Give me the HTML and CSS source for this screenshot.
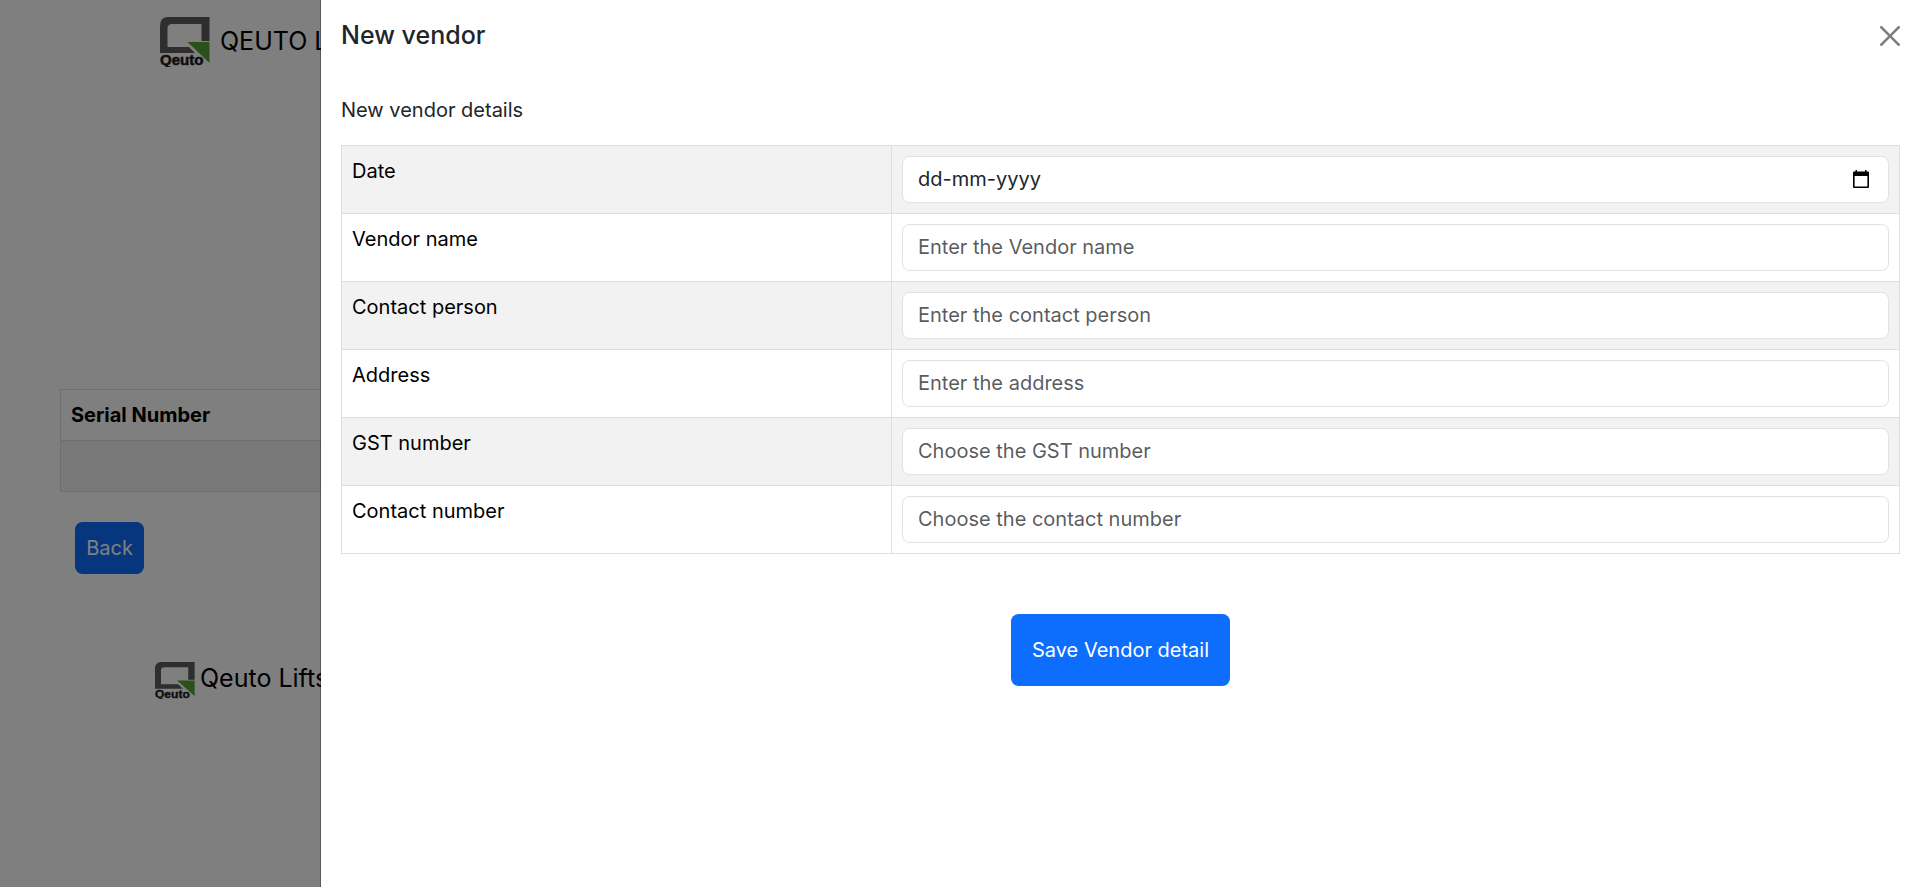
FILE: index.html
```html
<!DOCTYPE html>
<html lang="en">
<head>
<meta charset="utf-8">
<title>New vendor</title>
<link rel="stylesheet" href="styles.css">
</head>
<body>
<svg class="defs" width="0" height="0" aria-hidden="true">
  <symbol id="logo" viewBox="0 0 50 50" preserveAspectRatio="none">
    <path fill="#5c5c5c" fill-rule="evenodd" d="M8 0H49.5V24H41.5V7H12Q7.5 7 7.5 11.5V30H29L35 36H0V9Q0 0 8 0Z"/>
    <path fill="#56a234" d="M27.5 25H49.5V46Z"/>
    <text class="logo-text" x="0" y="48.3" textLength="43.5" lengthAdjust="spacingAndGlyphs">Qeuto</text>
  </symbol>
</svg>
<div class="page">
  <header class="brand">
    <svg class="brand-logo"><use href="#logo"/></svg>
    <span>QEUTO Lifts</span>
  </header>
  <table class="grid list">
    <tr><th>Serial Number</th></tr>
    <tr class="striped"><td></td></tr>
  </table>
  <button class="btn back">Back</button>
  <footer class="foot">
    <svg class="foot-logo"><use href="#logo"/></svg>
    <span>Qeuto Lifts</span>
  </footer>
</div>
<div class="backdrop"></div>
<aside class="panel">
  <div class="panel-head">
    <h5 class="panel-title">New vendor</h5>
    <svg class="close" viewBox="0 0 16 16"><path d="M.293.293a1 1 0 0 1 1.414 0L8 6.586 14.293.293a1 1 0 1 1 1.414 1.414L9.414 8l6.293 6.293a1 1 0 0 1-1.414 1.414L8 9.414l-6.293 6.293a1 1 0 0 1-1.414-1.414L6.586 8 .293 1.707a1 1 0 0 1 0-1.414z"/></svg>
  </div>
  <div class="panel-body">
    <p class="lead">New vendor details</p>
    <table class="grid form">
      <tr class="striped"><td class="label">Date</td><td><div class="field date"><span>dd-mm-yyyy</span><svg class="cal" viewBox="0 0 16 18"><path fill-rule="evenodd" d="M2.5 0H4V1.5H12V0H13.5V1.5H15Q16 1.5 16 2.5V17Q16 18 15 18H1Q0 18 0 17V2.5Q0 1.5 1 1.5H2.5ZM1.6 6V16.4H14.4V6Z"/></svg></div></td></tr>
      <tr><td class="label">Vendor name</td><td><input class="field" placeholder="Enter the Vendor name"></td></tr>
      <tr class="striped"><td class="label">Contact person</td><td><input class="field" placeholder="Enter the contact person"></td></tr>
      <tr><td class="label">Address</td><td><input class="field" placeholder="Enter the address"></td></tr>
      <tr class="striped"><td class="label">GST number</td><td><input class="field" placeholder="Choose the GST number"></td></tr>
      <tr><td class="label">Contact number</td><td><input class="field" placeholder="Choose the contact number"></td></tr>
    </table>
    <button class="btn save">Save Vendor detail</button>
  </div>
</aside>
</body>
</html>
```
FILE: styles.css
```css
* { box-sizing: border-box; }
body {
  margin: 0;
  height: 887px;
  overflow: hidden;
  font: 400 20px/30px Inter, sans-serif;
  color: #212529;
  background: #fff;
}
.defs { position: absolute; }
.logo-text { font: 700 14.5px "Liberation Sans", sans-serif; fill: #1c1c1c; stroke: #1c1c1c; stroke-width: .5px; }
.page { height: 887px; padding: 17px 0 0 60px; overflow: hidden; color: #000; }
.brand, .foot { display: flex; align-items: center; font-size: 25px; white-space: nowrap; }
.brand { height: 50px; padding-left: 100px; gap: 10px; }
.brand span { padding-bottom: 2px; }
.brand-logo { width: 50px; height: 50px; }
.foot { padding-left: 95px; gap: 5px; height: 38px; margin-top: 87px; }
.foot span { padding-bottom: 5px; }
.foot-logo { width: 40px; height: 37px; }
.grid { border-collapse: collapse; table-layout: fixed; color: #000; }
.grid td, .grid th { border: 1px solid #dcdee0; padding: 10px; vertical-align: top; text-align: left; }
.striped { background: #f2f2f2; }
.list { width: 1800px; margin-top: 322px; }
.list tr { height: 51px; }
.btn { display: block; border: 0; border-radius: 7.5px; background: #0d6efd; color: #fff; font: inherit; }
.back { width: 69px; height: 52px; padding: 0; margin: 30px 0 0 15px; }
.backdrop { position: fixed; inset: 0; background: rgba(0, 0, 0, .5); }
.panel {
  position: fixed;
  inset: 0 0 0 auto;
  width: 1600px;
  background: #fff;
  background-clip: padding-box;
  border-left: 1px solid rgba(0, 0, 0, .3);
}
.panel-head { display: flex; justify-content: space-between; align-items: center; height: 72px; padding: 0 20px; }
.panel-title { margin: 0; padding-bottom: 2px; font-size: 25px; font-weight: 500; line-height: 36px; }
.close { width: 20px; height: 20px; opacity: .5; }
.panel-body { padding: 23px 20px; }
.lead { margin: 0 0 20px; }
.form { width: 1559px; }
.form .label { width: 550px; }
.field {
  display: flex;
  align-items: center;
  justify-content: space-between;
  width: 100%;
  height: 47px;
  margin: 0;
  padding: 0 15px 2px;
  border: 1px solid #dee2e6;
  border-radius: 7.5px;
  background: #fff;
  color: #212529;
  font: inherit;
}
.field::placeholder { color: rgba(33, 37, 41, .75); opacity: 1; }
.date { padding-right: 19px; }
.cal { width: 16px; height: 18px; fill: #000; }
.save { width: 219px; height: 72px; margin: 60px auto 0; padding: 0; }
```
